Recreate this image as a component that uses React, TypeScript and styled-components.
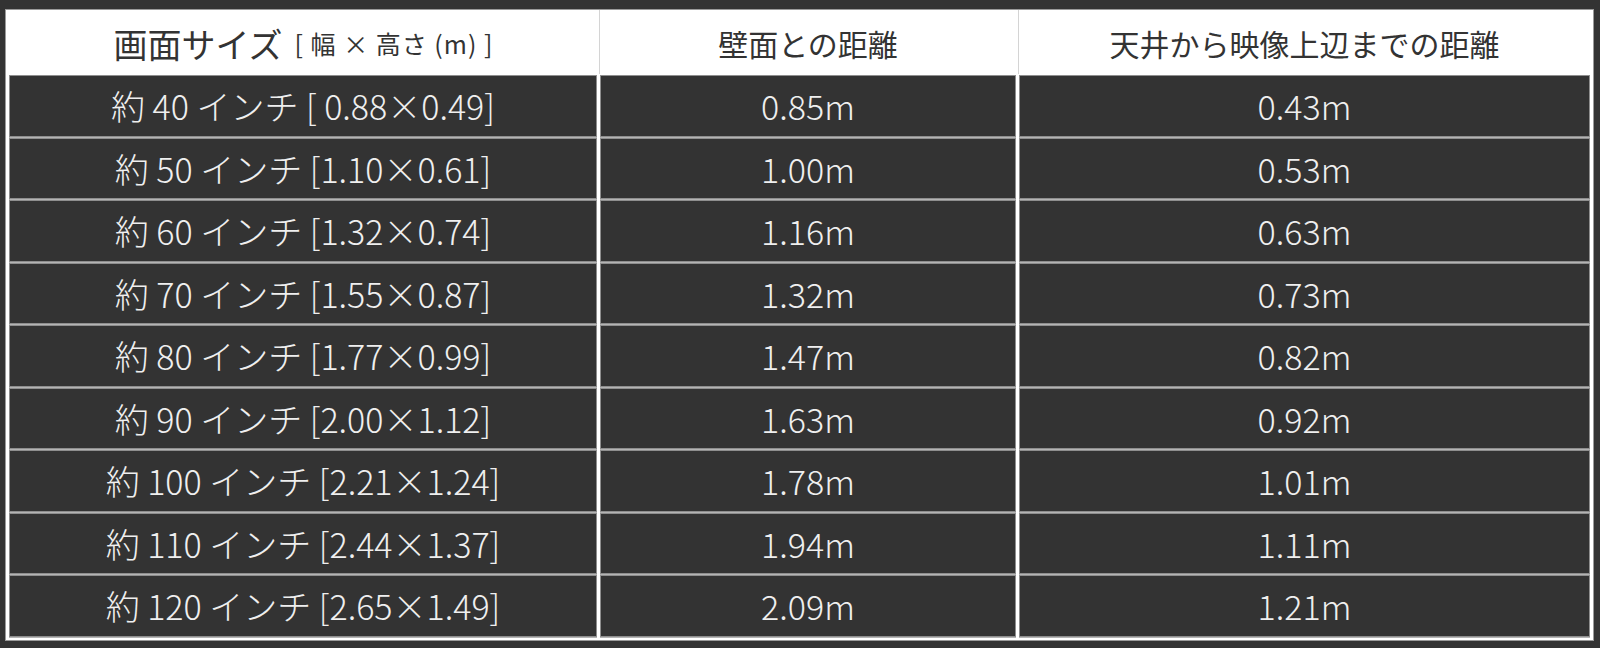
import React from "react";
import styled, { createGlobalStyle } from "styled-components";

const GlobalStyle = createGlobalStyle`
  html, body {
    margin: 0;
    padding: 0;
    background: #333333;
  }
  body {
    font-family: "Noto Sans CJK JP", "Noto Sans", sans-serif;
  }
`;

const rows: [string, string, string][] = [
  ["約 40 インチ [ 0.88×0.49]", "0.85m", "0.43m"],
  ["約 50 インチ [1.10×0.61]", "1.00m", "0.53m"],
  ["約 60 インチ [1.32×0.74]", "1.16m", "0.63m"],
  ["約 70 インチ [1.55×0.87]", "1.32m", "0.73m"],
  ["約 80 インチ [1.77×0.99]", "1.47m", "0.82m"],
  ["約 90 インチ [2.00×1.12]", "1.63m", "0.92m"],
  ["約 100 インチ [2.21×1.24]", "1.78m", "1.01m"],
  ["約 110 インチ [2.44×1.37]", "1.94m", "1.11m"],
  ["約 120 インチ [2.65×1.49]", "2.09m", "1.21m"],
];

const Page = styled.div`
  padding: 9px 0 0 5px;
`;

const Table = styled.div`
  width: 1581px;
  display: grid;
  grid-template-columns: 588px 416px 571px;
  grid-template-rows: 64px;
  grid-auto-rows: 61.5px;
  column-gap: 3px;
  row-gap: 1px;
  padding: 0 3px 3px 3px;
  background: #ffffff;
  border: 1px solid #9a9a9a;
`;

const HeadCell = styled.div<{ $divider?: boolean }>`
  display: flex;
  align-items: center;
  justify-content: center;
  padding-top: 2px;
  background: #ffffff;
  color: #333333;
  font-size: 30px;
  font-weight: 400;
  white-space: nowrap;
  border-left: 1px solid ${(p) => (p.$divider ? "#d4d4d4" : "transparent")};
  margin-left: ${(p) => (p.$divider ? "-1px" : "0")};
`;

const HeadMain = styled.span`
  font-size: 34px;
`;

const HeadSub = styled.span`
  font-size: 25px;
  letter-spacing: 1px;
  margin-left: 12px;
`;

const Cell = styled.div`
  display: flex;
  align-items: center;
  justify-content: center;
  background: #333333;
  border: 1px solid #8e8e8e;
  box-shadow: 0 1px 0 #b4b4b4;
  color: #efefef;
  font-size: 34px;
  font-weight: 200;
  white-space: nowrap;
`;

export default function App() {
  return (
    <>
      <GlobalStyle />
      <Page>
        <Table>
          <HeadCell>
            <HeadMain>画面サイズ</HeadMain>
            <HeadSub>[ 幅 × 高さ (m) ]</HeadSub>
          </HeadCell>
          <HeadCell $divider>壁面との距離</HeadCell>
          <HeadCell $divider>天井から映像上辺までの距離</HeadCell>
          {rows.map((r) => (
            <React.Fragment key={r[0]}>
              <Cell>{r[0]}</Cell>
              <Cell>{r[1]}</Cell>
              <Cell>{r[2]}</Cell>
            </React.Fragment>
          ))}
        </Table>
      </Page>
    </>
  );
}
